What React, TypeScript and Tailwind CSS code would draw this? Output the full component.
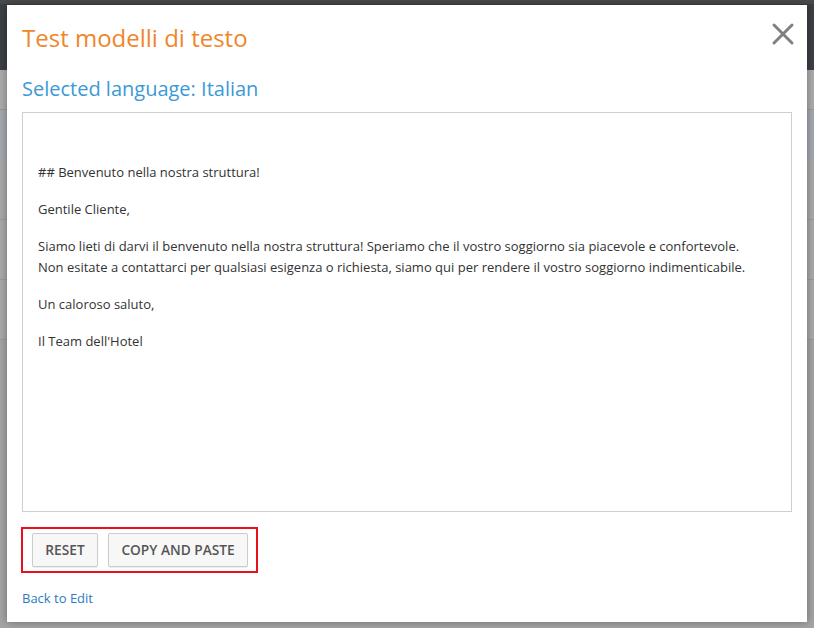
import { X } from "lucide-react"

const paragraphs = [
  ["## Benvenuto nella nostra struttura!"],
  ["Gentile Cliente,"],
  [
    "Siamo lieti di darvi il benvenuto nella nostra struttura! Speriamo che il vostro soggiorno sia piacevole e confortevole.",
    "Non esitate a contattarci per qualsiasi esigenza o richiesta, siamo qui per rendere il vostro soggiorno indimenticabile.",
  ],
  ["Un caloroso saluto,"],
  ["Il Team dell'Hotel"],
]

export default function App() {
  return (
    <div className="relative w-full h-[628px] overflow-hidden bg-[#a6a6a6] font-['Open_Sans',sans-serif]">
      {/* Dimmed page behind the modal */}
      <div className="flex flex-col h-full">
        <div className="h-[4px] bg-[#4a4a4a]" />
        <div className="h-[66px] bg-[#3c3f44]" />
        <div className="h-[40px] bg-[#acacac] border-b border-[#999]" />
        <div className="h-[50px] bg-[#a3a9ae]" />
        <div className="h-[60px] bg-[#a9a9a9] border-b border-[#9a9a9a]" />
        <div className="h-[60px] bg-[#a9a9a9] border-b border-[#9a9a9a]" />
        <div className="h-[60px] bg-[#a9a9a9] border-b border-[#9a9a9a]" />
        <div className="flex-1 bg-[#a4a4a4]" />
      </div>

      {/* Modal */}
      <div className="absolute left-[7px] top-[5px] w-[800px] h-[617px] bg-white shadow-[0_0_8px_rgba(0,0,0,0.35)] px-[15px] pt-[18px]">
        <button className="absolute right-[6px] top-[11px] text-[#808080]" aria-label="Close">
          <X className="w-[36px] h-[36px]" strokeWidth={2} />
        </button>

        <h2 className="text-[24px] leading-[30px] text-[#f0862a]">Test modelli di testo</h2>
        <h3 className="mt-[22px] text-[20px] leading-[28px] text-[#3b9ad6]">Selected language: Italian</h3>

        <div className="mt-[9px] h-[400px] border border-[#cfcfcf] pt-[49px] px-[15px] text-[13px] leading-[21px] text-[#333] flex flex-col gap-4">
          {paragraphs.map((lines, i) => (
            <p key={i}>
              {lines.map((l, j) => (
                <span key={j} className="block whitespace-nowrap">
                  {l}
                </span>
              ))}
            </p>
          ))}
        </div>

        <div className="mt-[15px] -ml-[1px] inline-flex gap-[10px] border-2 border-[#e8101a] pl-[9px] pr-[8px] py-[4px]">
          <button className="h-[34px] w-[66px] bg-[#f7f7f7] border border-[#cccccc] rounded-[2px] shadow-[0_1px_1px_rgba(0,0,0,0.08)] text-[13.7px] font-semibold text-[#555] uppercase">
            Reset
          </button>
          <button className="h-[34px] w-[140px] bg-[#f7f7f7] border border-[#cccccc] rounded-[2px] shadow-[0_1px_1px_rgba(0,0,0,0.08)] text-[13.7px] font-semibold text-[#555] uppercase">
            Copy and paste
          </button>
        </div>

        <div className="mt-[15px] text-[13px] leading-[20px]">
          <a href="#" className="text-[#2b7bbf]">
            Back to Edit
          </a>
        </div>
      </div>
    </div>
  )
}
